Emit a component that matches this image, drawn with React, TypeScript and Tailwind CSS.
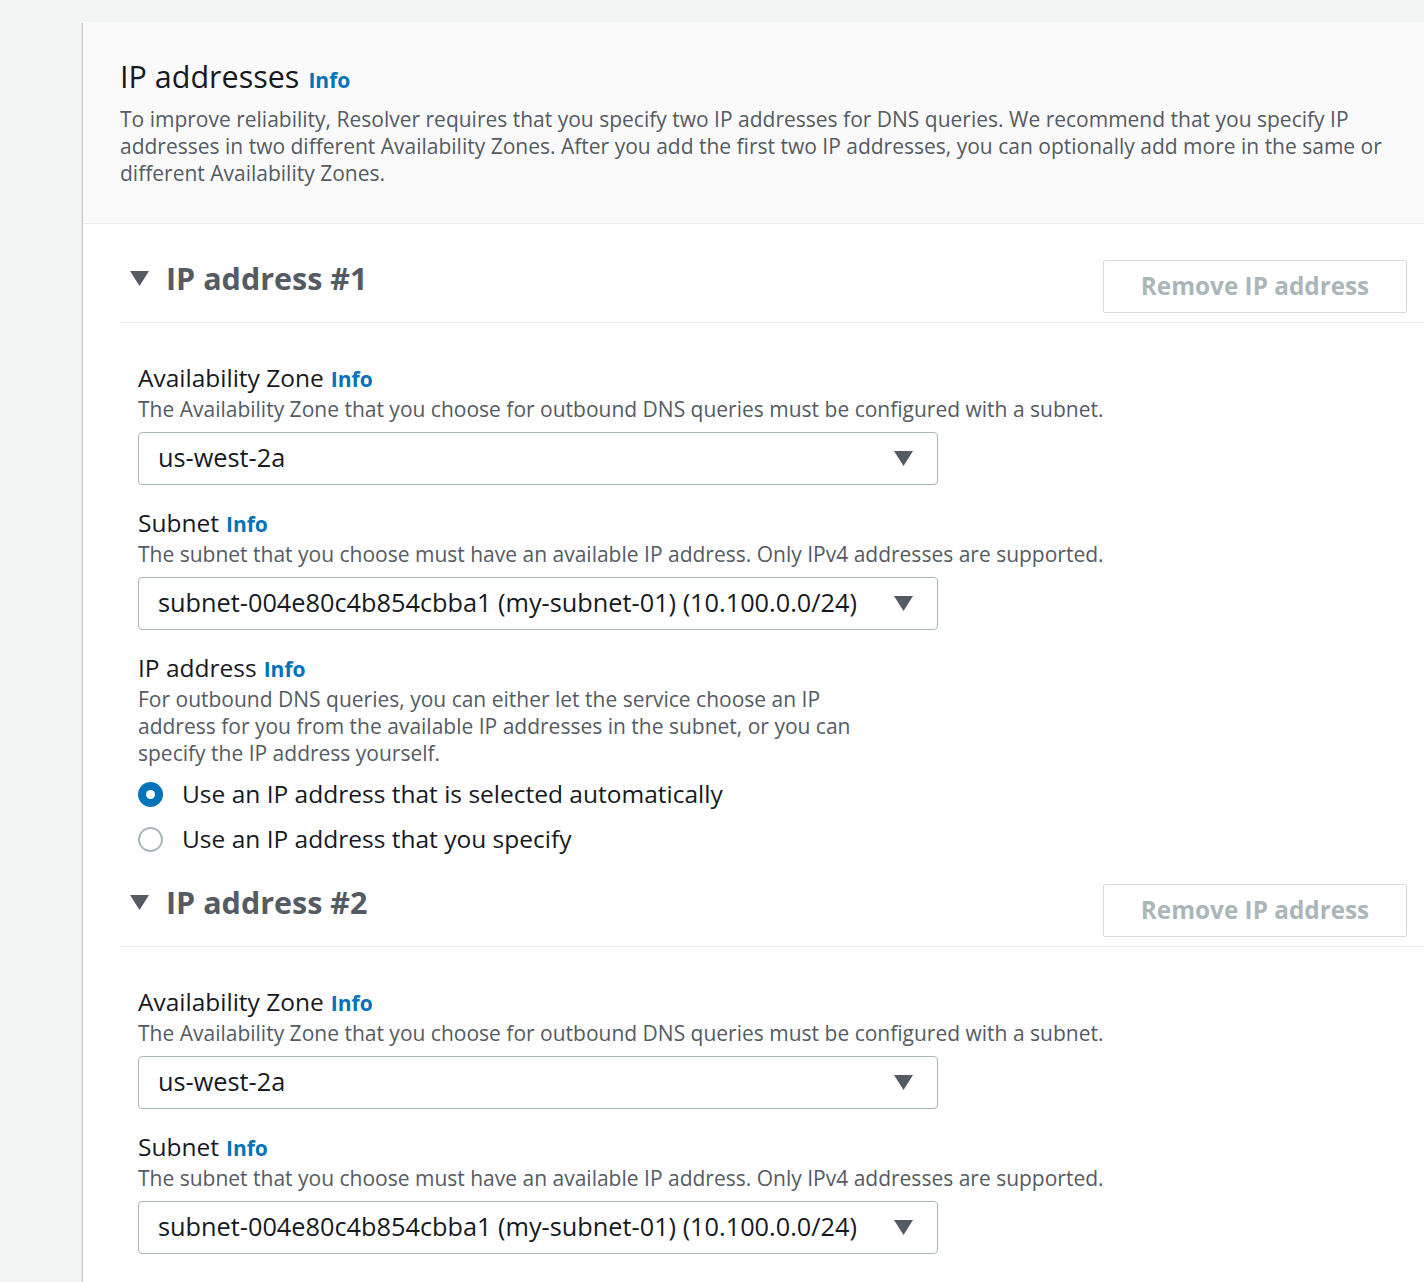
import React from 'react'

const FONT = "font-['Open_Sans','Noto_Sans',Arial,sans-serif]"

function Caret({ className = '' }: { className?: string }) {
  return (
    <svg width="19" height="15" viewBox="0 0 19 15" className={className}>
      <path d="M0 0 H19 L9.5 15 Z" fill="#545b64" />
    </svg>
  )
}

function Label({ text }: { text: string }) {
  return (
    <div className="flex h-[32px] items-baseline leading-[32px]">
      <span className="text-[24.5px] text-[#16191f]">{text}</span>
      <span className="ml-[7px] text-[21px] font-bold text-[#0073bb]">Info</span>
    </div>
  )
}

function Field({ label, desc, value }: { label: string; desc: string; value: string }) {
  return (
    <div>
      <Label text={label} />
      <div className="mt-[2.5px] text-[21px] leading-[27px] text-[#545b64]">{desc}</div>
      <div className="mt-[8.5px] flex h-[53px] w-[800px] items-center justify-between rounded-[4px] border border-[#aab7b8] bg-white pl-[19px] pr-[24px]">
        <span className="text-[25.3px] text-[#16191f]">{value}</span>
        <Caret />
      </div>
    </div>
  )
}

function Radio({ checked, label }: { checked?: boolean; label: string }) {
  return (
    <div className="flex h-[45px] items-center gap-[19px]">
      {checked ? (
        <span className="flex h-[25px] w-[25px] items-center justify-center rounded-full bg-[#0073bb]">
          <span className="h-[9px] w-[9px] rounded-full bg-white" />
        </span>
      ) : (
        <span className="h-[25px] w-[25px] rounded-full border-2 border-[#aab7b8] bg-white" />
      )}
      <span className="text-[24.5px] text-[#16191f]">{label}</span>
    </div>
  )
}

function IpSection({ n, first }: { n: number; first?: boolean }) {
  return (
    <section className={first ? 'pt-[36px]' : 'pt-[22px]'}>
      <div className="flex items-start justify-between border-b border-[#eaeded] pb-[8.5px] pr-[17px]">
        <div className="flex h-[37px] items-center">
          <Caret className="ml-[10px]" />
          <h2 className="ml-[17px] text-[30.5px] font-bold leading-[37px] text-[#545b64]">IP address #{n}</h2>
        </div>
        <button className="h-[53px] w-[304px] rounded-[2px] border border-[#d5dbdb] bg-white text-[24.3px] font-bold text-[#aab7b8]">
          Remove IP address
        </button>
      </div>

      <div className="pl-[18px] pt-[39px]">
        <Field
          label="Availability Zone"
          desc="The Availability Zone that you choose for outbound DNS queries must be configured with a subnet."
          value="us-west-2a"
        />
        <div className="mt-[22px]">
          <Field
            label="Subnet"
            desc="The subnet that you choose must have an available IP address. Only IPv4 addresses are supported."
            value="subnet-004e80c4b854cbba1 (my-subnet-01) (10.100.0.0/24)"
          />
        </div>
        <div className="mt-[22px]">
          <Label text="IP address" />
          <div className="mt-[2.5px] max-w-[715px] text-[21px] leading-[27px] text-[#545b64]">
            For outbound DNS queries, you can either let the service choose an IP address for you from the available IP
            addresses in the subnet, or you can specify the IP address yourself.
          </div>
          <div className="mt-[5px]">
            <Radio checked label="Use an IP address that is selected automatically" />
            <Radio label="Use an IP address that you specify" />
          </div>
        </div>
      </div>
    </section>
  )
}

export default function App() {
  return (
    <div className={`${FONT} min-h-screen overflow-hidden bg-[#f2f3f3] pl-[83px] pt-[22px]`}>
      <div className="bg-white shadow-[0_1px_1px_0_rgba(0,28,36,0.3),-1px_1px_1px_0_rgba(0,28,36,0.15)]">
        <header className="border-b border-[#eaeded] bg-[#fafafa] pb-[36px] pl-[37px] pr-[20px] pt-[31px]">
          <h1 className="flex items-baseline text-[30.5px] leading-[46px] text-[#16191f]">
            IP addresses
            <span className="ml-[9px] text-[21px] font-bold text-[#0073bb]">Info</span>
          </h1>
          <p className="mt-[3px] text-[21px] leading-[27px] text-[#545b64]">
            To improve reliability, Resolver requires that you specify two IP addresses for DNS queries. We recommend that
            you specify IP addresses in two different Availability Zones. After you add the first two IP addresses, you can
            optionally add more in the same or different Availability Zones.
          </p>
        </header>
        <div className="pb-[40px] pl-[37px]">
          <IpSection n={1} first />
          <IpSection n={2} />
        </div>
      </div>
    </div>
  )
}
